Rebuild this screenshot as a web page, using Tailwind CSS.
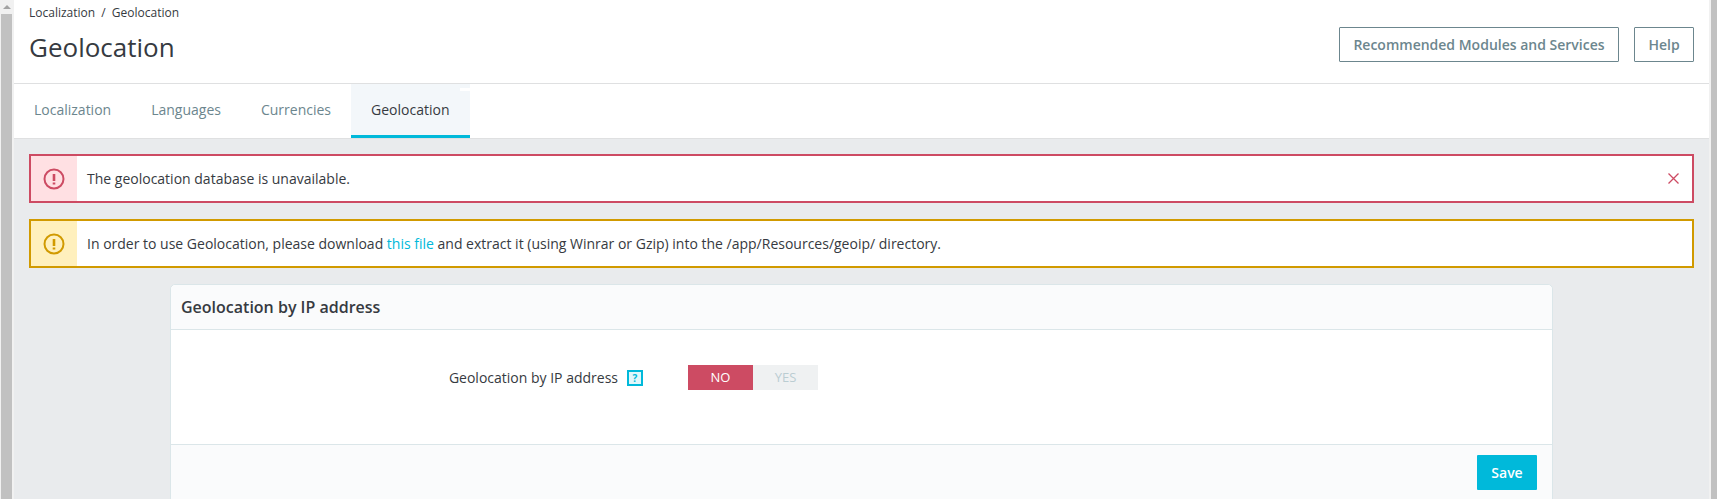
<!DOCTYPE html>
<html lang="en">
<head>
  <meta charset="UTF-8">
  <title>Geolocation</title>
  <script src="https://cdn.jsdelivr.net/npm/@tailwindcss/browser@4"></script>
</head>
<body class="h-[499px] overflow-hidden bg-white font-['Open_Sans',sans-serif] text-[14px] text-[#363a41]">
  <div class="flex h-[499px]">
    <!-- left scrollbar -->
    <div class="flex w-[14px] shrink-0 flex-col items-center bg-[#f1f1f1] pr-[2px] pl-[1px]">
      <div class="flex h-[14px] w-full items-center justify-center">
        <div class="h-0 w-0 border-x-[4px] border-b-[4px] border-x-transparent border-b-[#a3a3a3]"></div>
      </div>
      <div class="w-full flex-1 bg-[#c1c1c1]"></div>
    </div>

    <div class="flex min-w-0 flex-1 flex-col bg-[#e9ebed]">
      <!-- page head -->
      <div class="flex h-[84px] shrink-0 justify-between border-b border-[#dfe0e1] bg-white pr-[15px] pl-[15px]">
        <div>
          <div class="flex h-[26px] items-center gap-[6px] text-[12px] leading-none"><span>Localization&nbsp;&nbsp;/</span><span>Geolocation</span></div>
          <h1 class="mt-[5px] text-[26px] leading-[32px]">Geolocation</h1>
        </div>
        <div class="flex gap-[15px] pt-[27px]">
          <button class="h-[35px] w-[280px] rounded-[1px] border border-[#6c868e] text-[14px] font-semibold text-[#6c868e]">Recommended Modules and Services</button>
          <button class="h-[35px] w-[60px] rounded-[1px] border border-[#6c868e] text-[14px] font-semibold text-[#6c868e]">Help</button>
        </div>
      </div>

      <!-- tabs -->
      <div class="flex h-[55px] shrink-0 border-b border-[#dfe0e1] bg-white">
        <a class="flex h-full items-center px-[20px] pb-[3px] text-[#6c868e]">Localization</a>
        <a class="flex h-full items-center px-[20px] pb-[3px] text-[#6c868e]">Languages</a>
        <a class="flex h-full items-center px-[20px] pb-[3px] text-[#6c868e]">Currencies</a>
        <a class="relative flex h-full items-center border-b-[3px] border-[#00b9da] bg-[#f3f7fa] pr-[21px] pl-[20px] text-[#363a41]">
          Geolocation
          <span class="absolute top-[4px] right-0 h-[3px] w-[10px] bg-white"></span>
        </a>
      </div>

      <div class="flex min-h-0 flex-1 flex-col overflow-hidden px-[15px] pt-[15px]">
        <!-- alerts -->
        <div class="flex h-[49px] shrink-0 border-2 border-[#cd4b63] bg-white">
          <div class="flex w-[46px] items-center justify-center bg-[#ffe0e3]">
            <svg width="22" height="22" viewBox="0 0 22 22" fill="none"><circle cx="11" cy="11" r="9.5" stroke="#cd4b63" stroke-width="2"/><path d="M11 6v7" stroke="#cd4b63" stroke-width="2.600"/><path d="M11 14.500v2" stroke="#cd4b63" stroke-width="2.600"/></svg>
          </div>
          <p class="flex flex-1 items-center pl-[10px]">The geolocation database is unavailable.</p>
          <div class="flex w-[34px] items-center justify-center pr-[3px]">
            <svg width="11" height="11" viewBox="0 0 11 11"><path d="M.5.5l10 10M10.500.5l-10 10" stroke="#cd4b63" stroke-width="1.300"/></svg>
          </div>
        </div>
        <div class="mt-[16px] flex h-[49px] shrink-0 border-2 border-[#d19a00] bg-white">
          <div class="flex w-[46px] items-center justify-center bg-[#fff0bd]">
            <svg width="22" height="22" viewBox="0 0 22 22" fill="none"><circle cx="11" cy="11" r="9.5" stroke="#d19a00" stroke-width="2"/><path d="M11 6v7" stroke="#d19a00" stroke-width="2.600"/><path d="M11 14.500v2" stroke="#d19a00" stroke-width="2.600"/></svg>
          </div>
          <p class="flex flex-1 items-center pl-[10px]"><span>In order to use Geolocation, please download <a class="text-[#00b9da]">this file</a> and extract it (using Winrar or Gzip) into the /app/Resources/geoip/ directory.</span></p>
        </div>

        <!-- panel -->
        <div class="mx-[141px] mt-[16px] flex h-[230px] shrink-0 flex-col rounded-[5px] border border-[#dbe6e9] bg-white">
          <div class="flex h-[45px] shrink-0 items-center rounded-t-[5px] border-b border-[#dbe6e9] bg-[#fafbfc] pl-[10px] text-[16px] font-semibold">Geolocation by IP address</div>
          <div class="flex h-[114px] shrink-0 items-start pt-[35px]">
            <div class="flex h-[25px] w-[517px] items-center justify-end pr-[45px]">
              <span>Geolocation by IP address</span>
              <span class="ml-[9px] flex h-[16px] w-[16px] items-center justify-center border-2 border-[#00b9da] bg-[#e0f7fb] text-[10px] font-bold leading-none text-[#00b9da]">?</span>
            </div>
            <div class="flex h-[25px] text-[13px]">
              <span class="flex w-[65px] items-center justify-center bg-[#cd4b63] text-white">NO</span>
              <span class="flex w-[65px] items-center justify-center bg-[#eff1f2] text-[#bbcdd2]">YES</span>
            </div>
          </div>
          <div class="flex flex-1 items-start justify-end border-t border-[#dbe6e9] bg-[#fafbfc] pt-[10px] pr-[15px]">
            <button class="h-[35px] w-[60px] rounded-[1px] bg-[#00b9da] font-semibold text-white">Save</button>
          </div>
        </div>
      </div>
    </div>

    <!-- right scrollbar -->
    <div class="w-[8px] shrink-0 bg-[#f1f1f1] pl-[2px]">
      <div class="h-full w-full bg-[#c1c1c1]"></div>
    </div>
  </div>
</body>
</html>
